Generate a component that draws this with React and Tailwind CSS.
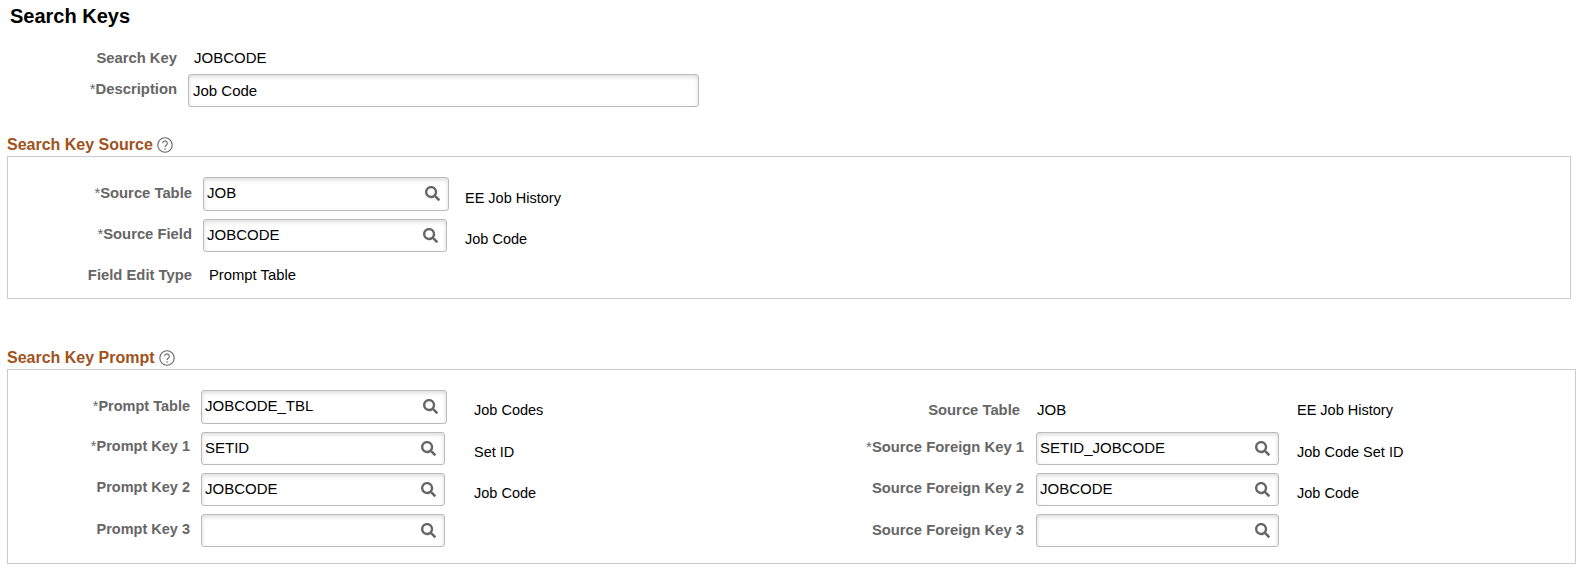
import { FaSearch } from 'react-icons/fa';

const labelClass = 'text-right text-[14.8px] font-bold text-[#666666]';
const promptLabelClass = 'pr-[11px] text-right text-[14.5px] font-bold text-[#666666]';
const descClass = 'pt-[9px] text-[14.5px] text-black';

function Req() {
  return <span className="font-normal">*</span>;
}

function Lookup({ value = '', width }) {
  return (
    <div className={`flex h-full items-center rounded-[3px] border border-[#bbbbbb] bg-white pl-[3px] pr-[8px] shadow-[inset_0_2px_4px_rgba(0,0,0,0.14)] ${width}`}>
      <input readOnly value={value} className="min-w-0 flex-1 bg-transparent text-black outline-none" />
      <FaSearch className="size-[15px] shrink-0 text-[#666666]" />
    </div>
  );
}

function HelpIcon() {
  return (
    <svg viewBox="0 0 16 16" className="size-4 text-[#666666]" fill="none" stroke="currentColor">
      <circle cx="8" cy="8" r="7.2" strokeWidth="1.1" />
      <path d="M5.7 6.2a2.3 2.3 0 1 1 3.5 2c-.8.5-1.2.9-1.2 1.9" strokeWidth="1.1" />
      <circle cx="8" cy="12" r=".8" fill="currentColor" stroke="none" />
    </svg>
  );
}

function SectionTitle({ children }) {
  return (
    <div className="flex h-[22px] items-center gap-1 pl-[7px]">
      <h2 className="text-[16px] font-bold text-[#a0521c]">{children}</h2>
      <HelpIcon />
    </div>
  );
}

export default function App() {
  return (
    <div className="h-[570px] w-[1585px] overflow-hidden bg-white font-['Liberation_Sans',Arial,sans-serif] text-[15px] text-black">
      <h1 className="pl-[10px] pt-px text-[20px] font-bold leading-[30px]">Search Keys</h1>

      <div className="mt-[16px] grid grid-cols-[177px_1fr] items-center">
        <div className={labelClass}>Search Key</div>
        <div className="pl-[17px]">JOBCODE</div>
      </div>
      <div className="mt-[4px] grid h-[33px] grid-cols-[188px_1fr] items-center">
        <div className={`${labelClass} pb-[2px] pr-[11px]`}><Req />Description</div>
        <input
          readOnly
          value="Job Code"
          className="h-full w-[511px] rounded-[3px] border border-[#bbbbbb] bg-white pl-1 text-black shadow-[inset_0_2px_4px_rgba(0,0,0,0.14)] outline-none"
        />
      </div>

      <div className="mt-[27px]">
        <SectionTitle>Search Key Source</SectionTitle>
      </div>
      <section className="ml-[7px] h-[143px] w-[1564px] border border-[#cccccc] pt-5">
        <div className="grid grid-cols-[195px_262px_1fr] grid-rows-[34px_33px_20px] items-center gap-y-2">
          <div className={`${labelClass} pr-[11px]`}><Req />Source Table</div>
          <Lookup value="JOB" width="w-[246px]" />
          <div className={`${descClass} translate-y-px`}>EE Job History</div>

          <div className={`${labelClass} pb-[2px] pr-[11px]`}><Req />Source Field</div>
          <Lookup value="JOBCODE" width="w-[244px]" />
          <div className={descClass}>Job Code</div>

          <div className={`${labelClass} mt-3 pr-[11px]`}>Field Edit Type</div>
          <div className="mt-3 pl-[6px] text-[14.8px]">Prompt Table</div>
        </div>
      </section>

      <div className="mt-[48px]">
        <SectionTitle>Search Key Prompt</SectionTitle>
      </div>
      <section className="ml-[7px] h-[195px] w-[1569px] border border-[#cccccc] pt-5">
        <div className="grid grid-cols-[193px_273px_366px_196px_261px_1fr] grid-rows-[34px_33px_33px_33px] items-center gap-y-2">
          <div className={promptLabelClass}><Req />Prompt Table</div>
          <Lookup value="JOBCODE_TBL" width="w-[246px]" />
          <div className={descClass}>Job Codes</div>
          <div className={`${labelClass} pt-2 pr-[16px]`}>Source Table</div>
          <div className="pt-2 pl-px">JOB</div>
          <div className="pt-2 text-[14.5px]">EE Job History</div>

          <div className={`${promptLabelClass} pb-[2px]`}><Req />Prompt Key 1</div>
          <Lookup value="SETID" width="w-[244px]" />
          <div className={descClass}>Set ID</div>
          <div className={`${labelClass} pb-[2px] pr-[12px]`}><Req />Source Foreign Key 1</div>
          <Lookup value="SETID_JOBCODE" width="w-[243px]" />
          <div className={descClass}>Job Code Set ID</div>

          <div className={`${promptLabelClass} pb-[2px]`}>Prompt Key 2</div>
          <Lookup value="JOBCODE" width="w-[244px]" />
          <div className={descClass}>Job Code</div>
          <div className={`${labelClass} pb-[2px] pr-[12px]`}>Source Foreign Key 2</div>
          <Lookup value="JOBCODE" width="w-[243px]" />
          <div className={descClass}>Job Code</div>

          <div className={promptLabelClass}>Prompt Key 3</div>
          <Lookup width="w-[244px]" />
          <div />
          <div className={`${labelClass} pr-[12px]`}>Source Foreign Key 3</div>
          <Lookup width="w-[243px]" />
          <div />
        </div>
      </section>
    </div>
  );
}
